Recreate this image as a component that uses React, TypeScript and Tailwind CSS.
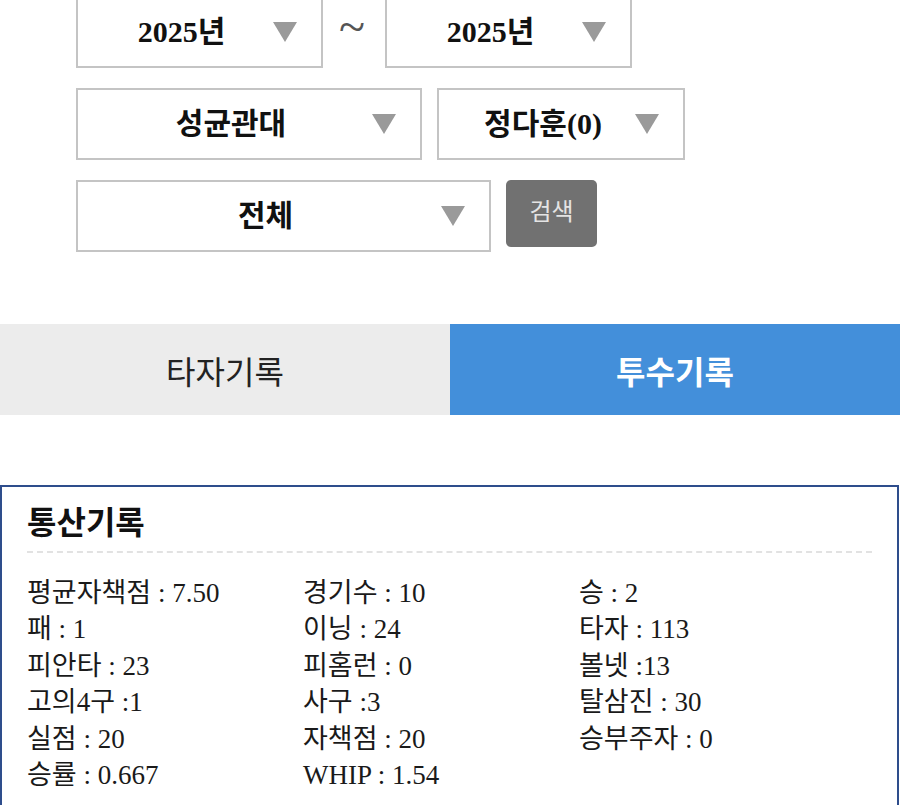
import React from "react";

const FONT = { fontFamily: '"Liberation Serif", "Noto Sans CJK KR", serif' };
const KR = { fontFamily: '"Noto Sans CJK KR", sans-serif' };

function Arrow() {
  return (
    <svg className="absolute top-1/2 -translate-y-1/2 right-[24px]" width="24" height="20" viewBox="0 0 24 20">
      <polygon points="0,0 24,0 12,20" fill="#9a9a9a" />
    </svg>
  );
}

function Select({ label, w }: { label: string; w: string }) {
  return (
    <div className={`relative h-[72px] border-2 border-[#c4c4c4] bg-white flex items-center justify-center pr-[36px] ${w}`}>
      <span className="text-[30px] font-bold text-[#111] leading-none" style={FONT}>{label}</span>
      <Arrow />
    </div>
  );
}

const stats: string[][] = [
  ["평균자책점 : 7.50", "경기수 : 10", "승 : 2"],
  ["패 : 1", "이닝 : 24", "타자 : 113"],
  ["피안타 : 23", "피홈런 : 0", "볼넷 :13"],
  ["고의4구 :1", "사구 :3", "탈삼진 : 30"],
  ["실점 : 20", "자책점 : 20", "승부주자 : 0"],
  ["승률 : 0.667", "WHIP : 1.54", ""],
];

export default function App() {
  return (
    <div className="w-[900px] h-[805px] overflow-hidden bg-white" style={FONT}>
      <div className="pl-[76px] -mt-[4px] flex flex-col gap-[20px]">
        <div className="flex items-center">
          <div className="w-[247px] -mt-[0px]">
            <Select label="2025년" w="w-[247px]" />
          </div>
          <div className="w-[62px] flex justify-center pr-[4px] pb-[10px]">
            <span className="text-[48px] text-[#555] leading-[56px]">~</span>
          </div>
          <Select label="2025년" w="w-[247px]" />
        </div>
        <div className="flex items-center gap-[15px]">
          <Select label="성균관대" w="w-[346px]" />
          <Select label="정다훈(0)" w="w-[248px]" />
        </div>
        <div className="flex items-start gap-[15px]">
          <Select label="전체" w="w-[415px]" />
          <div className="w-[91px] h-[67px] rounded-[5px] bg-[#717171] flex items-center justify-center pb-[8px]">
            <span className="text-[24px] text-[#e4e4e4] leading-none" style={KR}>검색</span>
          </div>
        </div>
      </div>

      <div className="mt-[72px] flex h-[91px]">
        <div className="w-[450px] bg-[#ececec] flex items-center justify-center">
          <span className="text-[32px] text-[#222] leading-none" style={KR}>타자기록</span>
        </div>
        <div className="w-[450px] bg-[#438fda] flex items-center justify-center">
          <span className="text-[32px] font-bold text-white leading-none" style={KR}>투수기록</span>
        </div>
      </div>

      <div className="mt-[70px] mr-[1px] border-2 border-[#2e4d8c] h-[400px] px-[25px] pt-[16px]">
        <div className="text-[32px] font-bold text-[#111] leading-[34px]" style={KR}>통산기록</div>
        <div className="mt-[14px] border-t-2 border-dashed border-[#e2e2e2]" />
        <div className="mt-[22px] flex flex-col">
          {stats.map((row, i) => (
            <div key={i} className="flex h-[36.5px] items-center">
              {row.map((c, j) => (
                <div key={j} className="w-[276px] text-[27px] text-[#1a1a1a] leading-none whitespace-nowrap" style={FONT}>{c}</div>
              ))}
            </div>
          ))}
        </div>
      </div>
    </div>
  );
}
